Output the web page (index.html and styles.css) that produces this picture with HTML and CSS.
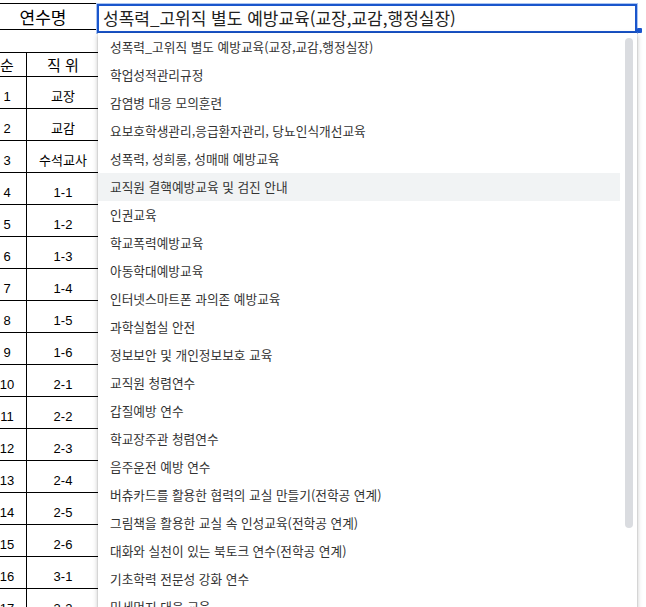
FILE: index.html
```html
<!DOCTYPE html>
<html lang="ko">
<head>
<meta charset="utf-8">
<title>연수명</title>
<link rel="stylesheet" href="styles.css">
</head>
<body>
<div class="sheet">
  <div class="row title-row"><div class="cell title">연수명</div></div>
  <div class="row blank-row"></div>
  <div class="row head-row"><div class="cell num">순</div><div class="cell pos">직 위</div></div>
  <div class="row data"><div class="cell num">1</div><div class="cell pos">교장</div></div>
  <div class="row data"><div class="cell num">2</div><div class="cell pos">교감</div></div>
  <div class="row data"><div class="cell num">3</div><div class="cell pos">수석교사</div></div>
  <div class="row data"><div class="cell num">4</div><div class="cell pos">1-1</div></div>
  <div class="row data"><div class="cell num">5</div><div class="cell pos">1-2</div></div>
  <div class="row data"><div class="cell num">6</div><div class="cell pos">1-3</div></div>
  <div class="row data"><div class="cell num">7</div><div class="cell pos">1-4</div></div>
  <div class="row data"><div class="cell num">8</div><div class="cell pos">1-5</div></div>
  <div class="row data"><div class="cell num">9</div><div class="cell pos">1-6</div></div>
  <div class="row data"><div class="cell num">10</div><div class="cell pos">2-1</div></div>
  <div class="row data"><div class="cell num">11</div><div class="cell pos">2-2</div></div>
  <div class="row data"><div class="cell num">12</div><div class="cell pos">2-3</div></div>
  <div class="row data"><div class="cell num">13</div><div class="cell pos">2-4</div></div>
  <div class="row data"><div class="cell num">14</div><div class="cell pos">2-5</div></div>
  <div class="row data"><div class="cell num">15</div><div class="cell pos">2-6</div></div>
  <div class="row data"><div class="cell num">16</div><div class="cell pos">3-1</div></div>
  <div class="row data"><div class="cell num">17</div><div class="cell pos">3-2</div></div>
</div>

<div class="editor">성폭력_고위직 별도 예방교육(교장,교감,행정실장)</div>
<div class="handle"></div>

<div class="dropdown">
  <ul class="options">
    <li>성폭력_고위직 별도 예방교육(교장,교감,행정실장)</li>
    <li>학업성적관리규정</li>
    <li>감염병 대응 모의훈련</li>
    <li>요보호학생관리,응급환자관리, 당뇨인식개선교육</li>
    <li>성폭력, 성희롱, 성매매 예방교육</li>
    <li class="active">교직원 결핵예방교육 및 검진 안내</li>
    <li>인권교육</li>
    <li>학교폭력예방교육</li>
    <li>아동학대예방교육</li>
    <li>인터넷스마트폰 과의존 예방교육</li>
    <li>과학실험실 안전</li>
    <li>정보보안 및 개인정보보호 교육</li>
    <li>교직원 청렴연수</li>
    <li>갑질예방 연수</li>
    <li>학교장주관 청렴연수</li>
    <li>음주운전 예방 연수</li>
    <li>버츄카드를 활용한 협력의 교실 만들기(전학공 연계)</li>
    <li>그림책을 활용한 교실 속 인성교육(전학공 연계)</li>
    <li>대화와 실천이 있는 북토크 연수(전학공 연계)</li>
    <li>기초학력 전문성 강화 연수</li>
    <li>미세먼지 대응 교육</li>
  </ul>
  <div class="gutter"><div class="thumb"></div></div>
</div>
</body>
</html>
```
FILE: styles.css
```css
* { box-sizing: border-box; }
html, body {
  margin: 0;
  padding: 0;
  background: #fff;
}
body {
  position: relative;
  width: 646px;
  height: 607px;
  overflow: hidden;
  font-family: "Liberation Sans", "Noto Sans CJK KR", sans-serif;
  color: #000;
}
.sheet {
  margin-left: -12px;
  padding-top: 3px;
  width: 160px;
}
.row {
  display: flex;
  border-bottom: 1px solid #000;
}
.title-row {
  height: 27px;
  border-top: 1px solid #000;
}
.blank-row { height: 23px; }
.head-row { height: 24px; }
.data { height: 32px; }
.cell {
  display: flex;
  justify-content: center;
}
.title {
  width: 110px;
  align-items: center;
  font-size: 17px;
  font-family: "Noto Sans CJK KR", sans-serif;
}
.num {
  width: 39px;
  border-right: 1px solid #000;
}
.pos {
  width: 72px;
}
.head-row .cell {
  align-items: center;
  font-size: 15px;
  font-family: "Noto Sans CJK KR", sans-serif;
}
.data .cell {
  align-items: flex-end;
  padding-bottom: 3px;
  font-size: 13px;
  line-height: 16px;
}
.editor {
  position: absolute;
  left: 97px;
  top: 4px;
  width: 540px;
  height: 29px;
  border: 2px solid #1a56cc;
  box-shadow: 0 0 0 1px #aac4f2;
  padding: 0 0 0 4px;
  font-family: "Noto Sans CJK KR", sans-serif;
  font-size: 17px;
  line-height: 24px;
  color: #222;
  background: #fff;
  white-space: nowrap;
}
.handle {
  position: absolute;
  left: 637px;
  top: 28px;
  width: 5px;
  height: 5px;
  background: #1a56cc;
  border-radius: 1px;
}
.dropdown {
  position: absolute;
  left: 98px;
  top: 33px;
  width: 539px;
  height: 600px;
  background: #fff;
  display: flex;
  box-shadow: 0 2px 5px rgba(0, 0, 0, 0.28), 0 0 1px rgba(0, 0, 0, 0.3);
}
.options {
  list-style: none;
  margin: 0;
  padding: 0;
  width: 522px;
}
.options li {
  height: 28px;
  padding: 0 0 2px 12px;
  display: flex;
  align-items: center;
  font-family: "Noto Sans CJK KR", sans-serif;
  font-size: 12.7px;
  color: #333;
  white-space: nowrap;
}
.options li.active {
  background: #f1f3f4;
}
.gutter {
  width: 17px;
  padding: 5px 0 0 5px;
}
.thumb {
  width: 8px;
  height: 490px;
  border-radius: 4px;
  background: #dadce0;
}
```
